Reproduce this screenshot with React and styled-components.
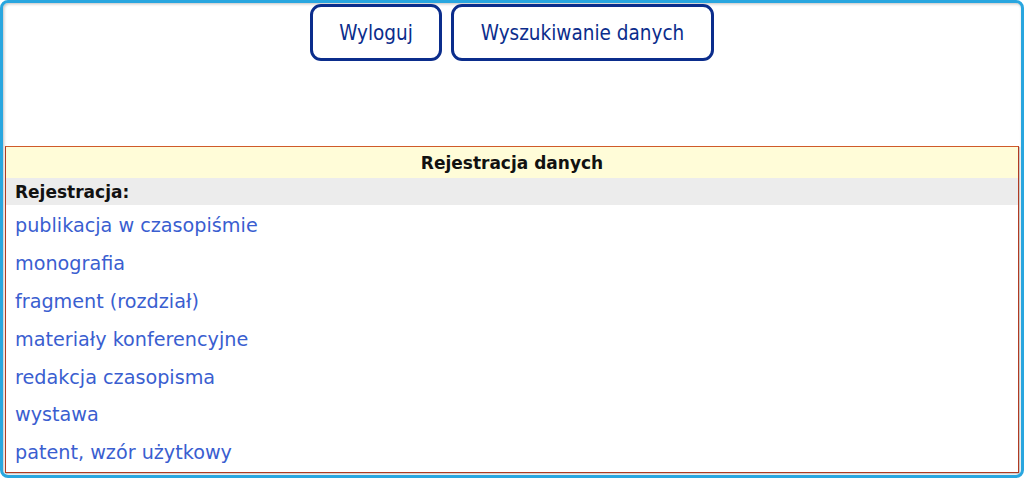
import React from "react";
import styled, { createGlobalStyle } from "styled-components";

const GlobalStyle = createGlobalStyle`
  html, body {
    margin: 0;
    padding: 0;
    background: #ffffff;
    font-family: "DejaVu Sans", Verdana, sans-serif;
  }
`;

const Frame = styled.div`
  box-sizing: border-box;
  width: 1024px;
  height: 478px;
  border: 3px solid #29a6df;
  border-radius: 8px;
  box-shadow: inset 1px 1px 3px rgba(0, 0, 0, 0.25);
  display: flex;
  flex-direction: column;
  padding: 0 2px 2px 2px;
  overflow: hidden;
`;

const TopBar = styled.div`
  flex-shrink: 0;
  height: 143px;
  display: flex;
  justify-content: center;
  align-items: flex-start;
  gap: 9px;
  padding-top: 1px;
  box-sizing: border-box;
`;

const NavButton = styled.button`
  box-sizing: border-box;
  height: 57px;
  width: ${(p) => p.$w}px;
  border: 3px solid #0b2d8c;
  border-radius: 11px;
  background: #ffffff;
  color: #0b2d8c;
  font-family: "DejaVu Sans Condensed", "DejaVu Sans", sans-serif;
  font-size: 20.5px;
  cursor: pointer;
  padding: 0;
`;

const Panel = styled.div`
  flex: 1;
  min-height: 0;
  border: 1px solid #b03a22;
  border-top-color: #cf5a2a;
  display: flex;
  flex-direction: column;
  overflow: hidden;
  box-shadow: 1px 1px 1px rgba(0, 0, 0, 0.2);
`;

const PanelHeader = styled.div`
  flex-shrink: 0;
  height: 31px;
  padding-top: 1px;
  box-sizing: border-box;
  background: #fffcd8;
  display: flex;
  align-items: center;
  justify-content: center;
  font-weight: bold;
  font-size: 17px;
  color: #111;
`;

const SectionRow = styled.div`
  flex-shrink: 0;
  height: 27px;
  background: #ececec;
  display: flex;
  align-items: center;
  padding-left: 9px;
  font-weight: bold;
  font-size: 17px;
  color: #111;
`;

const LinkList = styled.ul`
  list-style: none;
  margin: 0;
  padding: 2px 0 0 9px;
`;

const LinkItem = styled.li`
  height: 37.8px;
  display: flex;
  align-items: center;
`;

const ItemLink = styled.a`
  color: #3a5ed0;
  text-decoration: none;
  font-size: 19.2px;
  cursor: pointer;
`;

const items = [
  "publikacja w czasopiśmie",
  "monografia",
  "fragment (rozdział)",
  "materiały konferencyjne",
  "redakcja czasopisma",
  "wystawa",
  "patent, wzór użytkowy",
];

export default function App() {
  return (
    <>
      <GlobalStyle />
      <Frame>
        <TopBar>
          <NavButton $w={132}>Wyloguj</NavButton>
          <NavButton $w={263}>Wyszukiwanie danych</NavButton>
        </TopBar>
        <Panel>
          <PanelHeader>Rejestracja danych</PanelHeader>
          <SectionRow>Rejestracja:</SectionRow>
          <LinkList>
            {items.map((it) => (
              <LinkItem key={it}>
                <ItemLink>{it}</ItemLink>
              </LinkItem>
            ))}
          </LinkList>
        </Panel>
      </Frame>
    </>
  );
}
